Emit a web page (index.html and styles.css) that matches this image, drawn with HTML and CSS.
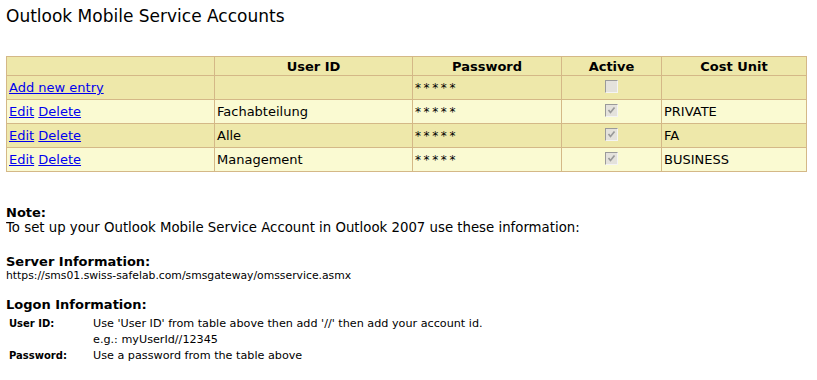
FILE: index.html
```html
<!DOCTYPE html>
<html lang="en">
<head>
    <meta charset="UTF-8">
    <title>Outlook Mobile Service Accounts</title>
    <link rel="stylesheet" href="styles.css">
</head>
<body>
    <h1 class="page-title">Outlook Mobile Service Accounts</h1>
    <table class="accounts">
        <tr class="head">
            <th class="col-actions"></th>
            <th class="col-user">User ID</th>
            <th class="col-pass">Password</th>
            <th class="col-active">Active</th>
            <th class="col-cost">Cost Unit</th>
        </tr>
        <tr class="dark">
            <td><a href="#">Add new entry</a></td>
            <td></td>
            <td class="stars">*****</td>
            <td class="center"><span class="check"></span></td>
            <td></td>
        </tr>
        <tr class="light">
            <td><a href="#">Edit</a> <a href="#">Delete</a></td>
            <td>Fachabteilung</td>
            <td class="stars">*****</td>
            <td class="center"><span class="check checked"></span></td>
            <td>PRIVATE</td>
        </tr>
        <tr class="dark">
            <td><a href="#">Edit</a> <a href="#">Delete</a></td>
            <td>Alle</td>
            <td class="stars">*****</td>
            <td class="center"><span class="check checked"></span></td>
            <td>FA</td>
        </tr>
        <tr class="light">
            <td><a href="#">Edit</a> <a href="#">Delete</a></td>
            <td>Management</td>
            <td class="stars">*****</td>
            <td class="center"><span class="check checked"></span></td>
            <td>BUSINESS</td>
        </tr>
    </table>

    <div class="info">
        <h3>Note:</h3>
        <p class="note">To set up your Outlook Mobile Service Account in Outlook 2007 use these information:</p>

        <h3 class="section">Server Information:</h3>
        <p class="small">https://sms01.swiss-safelab.com/smsgateway/omsservice.asmx</p>

        <h3 class="section logon-title">Logon Information:</h3>
        <table class="logon">
            <tr>
                <td class="label">User ID:</td>
                <td>Use 'User ID' from table above then add '//' then add your account id.</td>
            </tr>
            <tr>
                <td></td>
                <td>e.g.: myUserId//12345</td>
            </tr>
            <tr>
                <td class="label">Password:</td>
                <td>Use a password from the table above</td>
            </tr>
        </table>
    </div>
</body>
</html>
```

FILE: styles.css
```css
body {
    margin: 6px;
    font-family: "DejaVu Sans", Verdana, sans-serif;
    font-size: 13px;
    color: #000;
    background: #fff;
}
.page-title {
    font-size: 17px;
    font-weight: normal;
    margin: 0 0 30px 0;
}
a {
    color: #0000ee;
}
.accounts {
    border-collapse: collapse;
    width: 801px;
    border: 1px solid #d4b887;
}
.accounts th,
.accounts td {
    border: 1px solid #d4b887;
    padding: 0 2px;
    text-align: left;
}
.accounts th {
    height: 18px;
    text-align: center;
    background: #eee8aa;
}
.accounts td {
    height: 23px;
}
.accounts .center {
    text-align: center;
}
.accounts .stars {
    letter-spacing: 2.6px;
    font-size: 12px;
}
.col-actions { width: 203px; }
.col-user { width: 193px; }
.col-pass { width: 144px; }
.col-active { width: 95px; }
.dark td { background: #eee8aa; }
.light td { background: #fafad2; }
.check {
    display: inline-block;
    width: 11px;
    height: 11px;
    border: 1px solid;
    border-color: #9a9a9a #f4f4f4 #f4f4f4 #9a9a9a;
    background: #e4e2dc;
    vertical-align: middle;
    position: relative;
    top: -2px;
}
.check.checked {
    background: #e4e2dc url("data:image/svg+xml,%3Csvg xmlns='http://www.w3.org/2000/svg' width='11' height='11'%3E%3Cpath d='M2.5 5 L4.5 7.5 L8.5 2.5' stroke='%23999' stroke-width='1.7' fill='none'/%3E%3C/svg%3E") no-repeat;
}
.info {
    margin-top: 33px;
}
.info h3 {
    font-size: 13px;
    margin: 0;
}
.info p {
    margin: 0;
}
.info .note {
    font-size: 13.3px;
}
.info .section {
    margin-top: 19px;
}
.info .logon-title {
    margin-top: 15px;
}
.small {
    font-size: 10.8px;
}
.logon {
    border-collapse: collapse;
    font-size: 11.2px;
    margin-top: 3px;
}
.logon td {
    padding: 1px 3px 1px 3px;
    height: 14px;
}
.logon .label {
    font-size: 10px;
    font-weight: bold;
    width: 78px;
}
```
